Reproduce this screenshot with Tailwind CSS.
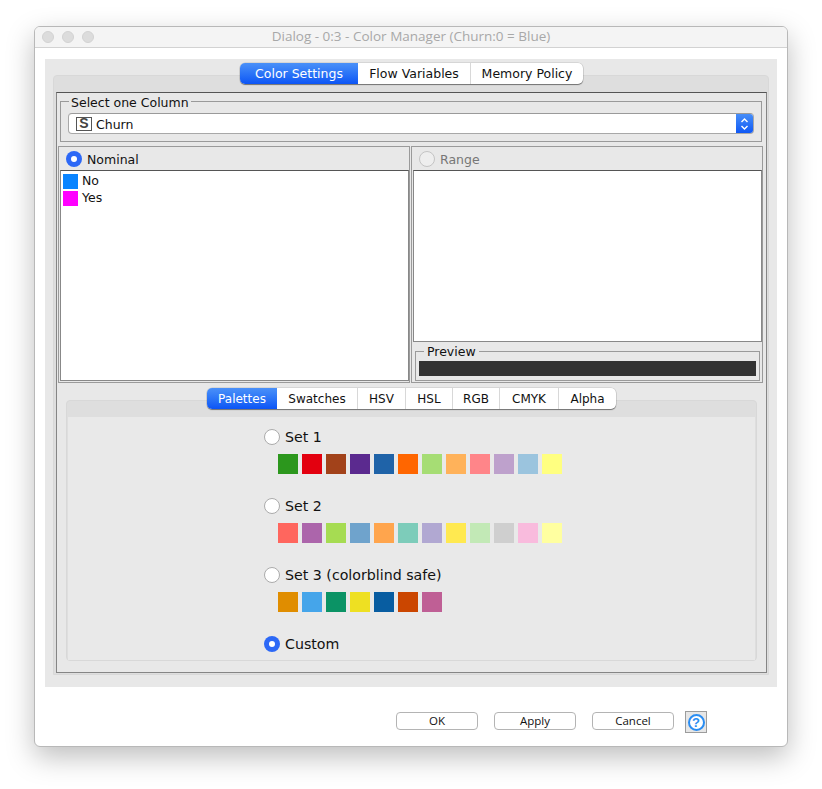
<!DOCTYPE html>
<html lang="en">
<head>
    <meta charset="UTF-8">
    <title>Dialog - 0:3 - Color Manager</title>
    <script src="https://cdn.jsdelivr.net/npm/@tailwindcss/browser@4"></script>
</head>
<body class="bg-white font-['DejaVu_Sans',sans-serif] text-[12.5px] text-[#111]">
<div class="h-[789px] pt-[26px] pl-[34px] overflow-hidden">

    <div class="w-[754px] h-[721px] flex flex-col rounded-[6px] border border-[#b8b8b8] bg-white shadow-[0_10px_28px_rgba(0,0,0,0.26)] overflow-hidden">

        <!-- Title bar -->
        <div class="h-[21px] shrink-0 relative flex items-center justify-center border-b border-[#d2d2d2] bg-[#f4f4f4]">
            <div class="absolute left-[7px] top-[4px] flex gap-2">
                <span class="size-3 rounded-full bg-[#dcdcdc] border border-[#d2d2d2]"></span>
                <span class="size-3 rounded-full bg-[#dcdcdc] border border-[#d2d2d2]"></span>
                <span class="size-3 rounded-full bg-[#dcdcdc] border border-[#d2d2d2]"></span>
            </div>
            <span class="font-['Open_Sans',sans-serif] text-[13.5px] text-[#a8a8a8] leading-none">Dialog - 0:3 - Color Manager (Churn:0 = Blue)</span>
        </div>

        <!-- Gray content -->
        <div class="mx-[10px] mt-[11px] w-[732px] h-[628px] shrink-0 bg-[#e8e8e8] pt-1">

            <!-- Top tabs -->
            <div class="relative z-10 flex justify-center h-[21px] -mb-[9px] pl-[1px]">
                <div class="flex rounded-[5px] bg-white shadow-[0_1px_1px_rgba(0,0,0,0.45),0_0_0_0.5px_rgba(0,0,0,0.15)] overflow-hidden">
                    <div class="w-[118px] pt-px flex items-center justify-center text-white bg-gradient-to-b from-[#4a90f8] to-[#0c54f5]">Color Settings</div>
                    <div class="w-[113px] pt-px flex items-center justify-center border-r border-[#d8d8d8]">Flow Variables</div>
                    <div class="w-[112px] pt-px flex items-center justify-center">Memory Policy</div>
                </div>
            </div>

            <!-- Outer pane -->
            <div class="mx-2 h-[600px] rounded-t-[4px] bg-[#dedede] border border-[#d8d8d8] pt-[16px] pl-[2px] pr-[1px] pb-[1px]">
                <div class="h-[581px] border border-[#858585] border-t-[#555] bg-[#e8e8e8]">

                    <!-- Select one Column -->
                    <fieldset class="ml-[3px] mr-[4px] mt-px h-[48px] border border-[#9a9a9a] px-[7px]">
                        <legend class="ml-[1px] px-[2px] leading-[14px]"><span class="inline-block translate-y-[2px]">Select one Column</span></legend>
                        <div class="mt-[5px] h-[21px] flex items-center rounded-[4px] bg-white border-b border-x border-[#a8a8a8] border-t-[#9a9a9a] border-t overflow-hidden">
                            <span class="ml-[7px] w-4 h-[14px] flex items-center justify-center border border-[#555] font-['Liberation_Sans',sans-serif] font-bold text-[14px] text-[#444]">S</span>
                            <span class="ml-1 flex-1 pt-[3px]">Churn</span>
                            <span class="w-[17px] h-[21px] flex items-center justify-center bg-gradient-to-b from-[#4a90f8] to-[#0c54f5]">
                                <svg width="9" height="14" viewBox="0 0 9 14" fill="none" stroke="white" stroke-width="1.4"><path d="M1.5 5 4.5 2 7.5 5"/><path d="M1.5 9 4.5 12 7.5 9"/></svg>
                            </span>
                        </div>
                    </fieldset>

                    <!-- Nominal and Range -->
                    <div class="ml-px mt-[4px] flex gap-px">
                        <div class="w-[352px] h-[237px] border border-[#9a9a9a] pl-px pb-px flex flex-col">
                            <div class="h-[23px] pt-px flex items-center gap-[5px] pl-[6px]">
                                <span class="size-4 rounded-full bg-[#2c68f6] flex items-center justify-center"><span class="size-[6px] rounded-full bg-white"></span></span>
                                <span class="pt-[2px]">Nominal</span>
                            </div>
                            <div class="flex-1 bg-white border border-[#888] border-t-[#555] pl-[2px] pt-[2px]">
                                <div class="h-[17px] flex items-center gap-1"><span class="size-[15px] bg-[#0a84ff]"></span><span>No</span></div>
                                <div class="h-[17px] flex items-center gap-1"><span class="size-[15px] bg-[#ff00ff]"></span><span>Yes</span></div>
                            </div>
                        </div>
                        <div class="w-[352px] h-[237px] border border-[#9a9a9a] pl-px pb-px flex flex-col">
                            <div class="h-[23px] pt-px flex items-center gap-[5px] pl-[6px] text-[#777]">
                                <span class="size-4 rounded-full bg-[#eeeeee] border border-[#c4c4c4]"></span>
                                <span class="pt-[2px]">Range</span>
                            </div>
                            <div class="h-[172px] bg-white border border-[#888] border-t-[#555]"></div>
                            <fieldset class="mx-[2px] mt-[2px] h-[37px] border border-[#9a9a9a] px-[3px]">
                                <legend class="ml-[5px] px-[3px] leading-[14px]"><span class="inline-block translate-y-px">Preview</span></legend>
                                <div class="mt-[3px] h-[15px] bg-[#333333]"></div>
                            </fieldset>
                        </div>
                    </div>

                    <!-- Palette tabs -->
                    <div class="relative z-10 flex justify-center h-[21px] mt-[5px] -mb-[9px] text-[12px]">
                        <div class="flex rounded-[5px] bg-white shadow-[0_1px_1px_rgba(0,0,0,0.45),0_0_0_0.5px_rgba(0,0,0,0.15)] overflow-hidden">
                            <div class="w-[70px] flex items-center justify-center text-white bg-gradient-to-b from-[#4a90f8] to-[#0c54f5]">Palettes</div>
                            <div class="w-[81px] flex items-center justify-center border-r border-[#d8d8d8]">Swatches</div>
                            <div class="w-[48px] flex items-center justify-center border-r border-[#d8d8d8]">HSV</div>
                            <div class="w-[47px] flex items-center justify-center border-r border-[#d8d8d8]">HSL</div>
                            <div class="w-[47px] flex items-center justify-center border-r border-[#d8d8d8]">RGB</div>
                            <div class="w-[59px] flex items-center justify-center border-r border-[#d8d8d8]">CMYK</div>
                            <div class="w-[57px] flex items-center justify-center">Alpha</div>
                        </div>
                    </div>

                    <!-- Palette pane -->
                    <div class="ml-[9px] w-[691px] h-[261px] rounded-[4px] bg-[#dedede] border border-[#d8d8d8] pt-[16px] px-px pb-px">
                        <div class="h-[243px] bg-[#e9e9e9] pl-[196px] pt-[12px]">
                            <div class="h-4 flex items-center gap-[5px] text-[14.2px]">
                                <span class="size-4 rounded-full bg-white border border-[#ababab]"></span><span class="pt-[2px]">Set 1</span>
                            </div>
                            <div class="ml-[14px] mt-[9px] flex gap-1">
                                <span class="size-5 bg-[#2c971d]"></span><span class="size-5 bg-[#e3000f]"></span><span class="size-5 bg-[#a2421a]"></span><span class="size-5 bg-[#5b2a8f]"></span><span class="size-5 bg-[#1f63a8]"></span><span class="size-5 bg-[#ff6600]"></span><span class="size-5 bg-[#a6dd74]"></span><span class="size-5 bg-[#ffb25a]"></span><span class="size-5 bg-[#ff8589]"></span><span class="size-5 bg-[#bea1cc]"></span><span class="size-5 bg-[#9bc4de]"></span><span class="size-5 bg-[#ffff80]"></span>
                            </div>
                            <div class="mt-6 h-4 flex items-center gap-[5px] text-[14.2px]">
                                <span class="size-4 rounded-full bg-white border border-[#ababab]"></span><span class="pt-[2px]">Set 2</span>
                            </div>
                            <div class="ml-[14px] mt-[9px] flex gap-1">
                                <span class="size-5 bg-[#ff665e]"></span><span class="size-5 bg-[#ac65ab]"></span><span class="size-5 bg-[#a6dc52]"></span><span class="size-5 bg-[#6fa3cc]"></span><span class="size-5 bg-[#ffa54d]"></span><span class="size-5 bg-[#7dccba]"></span><span class="size-5 bg-[#b1a8d2]"></span><span class="size-5 bg-[#ffe950]"></span><span class="size-5 bg-[#c2e9b6]"></span><span class="size-5 bg-[#cfcfcf]"></span><span class="size-5 bg-[#f9bbdd]"></span><span class="size-5 bg-[#ffffa0]"></span>
                            </div>
                            <div class="mt-6 h-4 flex items-center gap-[5px] text-[14.2px]">
                                <span class="size-4 rounded-full bg-white border border-[#ababab]"></span><span class="pt-[2px]">Set 3 (colorblind safe)</span>
                            </div>
                            <div class="ml-[14px] mt-[9px] flex gap-1">
                                <span class="size-5 bg-[#e08d00]"></span><span class="size-5 bg-[#45a5ea]"></span><span class="size-5 bg-[#0b9365]"></span><span class="size-5 bg-[#eee022]"></span><span class="size-5 bg-[#085da1]"></span><span class="size-5 bg-[#cb4600]"></span><span class="size-5 bg-[#bf5f95]"></span>
                            </div>
                            <div class="mt-6 h-4 flex items-center gap-[5px] text-[14.2px]">
                                <span class="size-4 rounded-full bg-[#2c68f6] flex items-center justify-center"><span class="size-[6px] rounded-full bg-white"></span></span><span class="pt-[2px]">Custom</span>
                            </div>
                        </div>
                    </div>
                </div>
            </div>
        </div>

        <!-- Buttons -->
        <div class="ml-[361px] mt-6 flex items-start gap-4 font-['Open_Sans',sans-serif] text-[11.5px]">
            <button class="mt-px w-[82px] h-[18px] rounded-[4px] bg-white border border-[#b4b4b4] leading-none">OK</button>
            <button class="mt-px w-[82px] h-[18px] rounded-[4px] bg-white border border-[#b4b4b4] leading-none">Apply</button>
            <button class="mt-px w-[82px] h-[18px] rounded-[4px] bg-white border border-[#b4b4b4] leading-none">Cancel</button>
            <span class="-ml-[5px] w-[22px] h-[22px] flex items-center justify-center bg-[#e6e6e6] border border-[#9c9c9c]">
                <span class="size-[17px] rounded-full border-2 border-[#2a8df2] flex items-center justify-center bg-white font-['Liberation_Sans',sans-serif] font-bold text-[13px] leading-none text-[#2a8df2]">?</span>
            </span>
        </div>
    </div>

</div>
</body>
</html>
